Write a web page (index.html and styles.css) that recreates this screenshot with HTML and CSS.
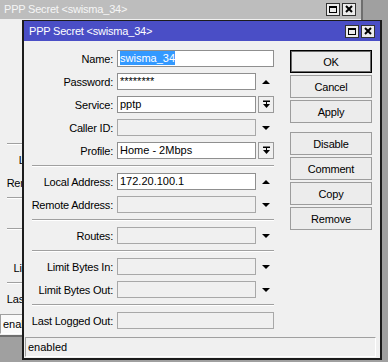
FILE: index.html
```html
<!DOCTYPE html>
<html lang="en">
<head>
    <meta charset="UTF-8">
    <meta name="viewport" content="width=device-width, initial-scale=1.0">
    <title>PPP Secret &lt;swisma_34&gt;</title>
    <link rel="stylesheet" href="styles.css">
</head>
<body>
    <div class="desktop">
        <!-- window behind, only its left strip shows; labels hidden by the front window are left empty -->
        <div class="window back">
            <div class="titlebar">
                <span class="title">PPP Secret &lt;swisma_34&gt;</span>
                <span class="tbtn"><span class="box"></span></span>
                <span class="tbtn"><svg width="8" height="8" viewBox="0 0 8 8"><path d="M1 1L7 7M7 1L1 7" stroke="#000" stroke-width="2"/></svg></span>
            </div>
            <div class="body">
                <div class="main">
                    <div class="form">
                        <div class="row"><label></label><div class="field wide"></div></div>
                        <div class="row"><label></label><div class="field"></div></div>
                        <div class="row"><label></label><div class="field"></div></div>
                        <div class="row"><label></label><div class="field"></div></div>
                        <div class="row"><label></label><div class="field"></div></div>
                        <div class="sep"></div>
                        <div class="row"><label>Local Address:</label><div class="field"></div></div>
                        <div class="row"><label>Remote Address:</label><div class="field"></div></div>
                        <div class="sep"></div>
                        <div class="row"><label></label><div class="field"></div></div>
                        <div class="sep"></div>
                        <div class="row"><label></label><div class="field"></div></div>
                        <div class="row"><label>Limit Bytes Out:</label><div class="field"></div></div>
                        <div class="sep"></div>
                        <div class="row"><label>Last Logged Out:</label><div class="field wide"></div></div>
                    </div>
                </div>
                <div class="status">enabled</div>
            </div>
        </div>

        <div class="window front">
            <div class="titlebar">
                <span class="title">PPP Secret &lt;swisma_34&gt;</span>
                <span class="tbtn"><span class="box"></span></span>
                <span class="tbtn"><svg width="8" height="8" viewBox="0 0 8 8"><path d="M1 1L7 7M7 1L1 7" stroke="#000" stroke-width="2"/></svg></span>
            </div>
            <div class="body">
                <div class="main">
                    <div class="form">
                        <div class="row"><label>Name:</label><div class="field wide"><span class="sel">swisma_34</span></div></div>
                        <div class="row"><label>Password:</label><div class="field">********</div><span class="spin up"></span></div>
                        <div class="row">
                            <label>Service:</label><div class="field">pptp</div>
                            <span class="spin drop"><svg width="9" height="9" viewBox="0 0 9 9"><rect x="1" y="0.5" width="7" height="1.5"/><rect x="4" y="2" width="1" height="2"/><path d="M1 4h7l-3.5 4z"/></svg></span>
                        </div>
                        <div class="row"><label>Caller ID:</label><div class="field off"></div><span class="spin down"></span></div>
                        <div class="row">
                            <label>Profile:</label><div class="field">Home - 2Mbps</div>
                            <span class="spin drop"><svg width="9" height="9" viewBox="0 0 9 9"><rect x="1" y="0.5" width="7" height="1.5"/><rect x="4" y="2" width="1" height="2"/><path d="M1 4h7l-3.5 4z"/></svg></span>
                        </div>
                        <div class="sep"></div>
                        <div class="row"><label>Local Address:</label><div class="field">172.20.100.1</div><span class="spin up"></span></div>
                        <div class="row"><label>Remote Address:</label><div class="field off"></div><span class="spin down"></span></div>
                        <div class="sep"></div>
                        <div class="row"><label>Routes:</label><div class="field off"></div><span class="spin down"></span></div>
                        <div class="sep"></div>
                        <div class="row"><label>Limit Bytes In:</label><div class="field off"></div><span class="spin down"></span></div>
                        <div class="row"><label>Limit Bytes Out:</label><div class="field off"></div><span class="spin down"></span></div>
                        <div class="sep"></div>
                        <div class="row"><label>Last Logged Out:</label><div class="field wide off"></div></div>
                    </div>
                    <div class="buttons">
                        <div class="btn default">OK</div>
                        <div class="btn">Cancel</div>
                        <div class="btn">Apply</div>
                        <div class="btn gap">Disable</div>
                        <div class="btn">Comment</div>
                        <div class="btn">Copy</div>
                        <div class="btn">Remove</div>
                    </div>
                </div>
                <div class="status">enabled</div>
            </div>
        </div>
    </div>
</body>
</html>
```

FILE: styles.css
```css
body {
    margin: 0;
    font-family: "Liberation Sans", Arial, sans-serif;
    font-size: 11px;
    color: #000;
    background-color: #a0a0a0;
}
.desktop {
    position: relative;
    width: 388px;
    height: 362px;
    overflow: hidden;
    background-color: #a0a0a0;
}
.window {
    position: absolute;
    display: flex;
    flex-direction: column;
    box-sizing: border-box;
    background-color: #f0f0f0;
    border: 2px solid #1c1c1c;
    border-top-width: 1px;
}
.window.back {
    left: -3px;
    top: -2px;
    width: 366px;
    height: 339px;
    border-color: #6e6e6e;
}
.window.front {
    left: 22px;
    top: 20px;
    width: 360px;
    height: 340px;
}
.titlebar {
    display: flex;
    align-items: center;
    height: 20px;
    padding: 0 5px;
    background-color: #4a4ec6;
    color: #fff;
}
.back .titlebar {
    background-color: #bdbdbd;
    color: #f6f6f6;
}
.title {
    flex: 1;
    white-space: nowrap;
    letter-spacing: -0.2px;
}
.tbtn {
    display: flex;
    align-items: center;
    justify-content: center;
    width: 14px;
    height: 13px;
    margin-left: 2px;
    box-sizing: border-box;
    border: 1px solid #333;
    background-color: #ececec;
}
.tbtn .box {
    width: 8px;
    height: 7px;
    box-sizing: border-box;
    border: 1px solid #000;
    border-top-width: 2px;
}
.body {
    display: flex;
    flex-direction: column;
    flex: 1;
}
/* the back window is covered past x=22, so its body is cut there */
.back .body {
    width: 23px;
    overflow: hidden;
}
.main {
    display: flex;
    gap: 16px;
    padding: 9px 8px 0 8px;
}
.form {
    display: flex;
    flex-direction: column;
    flex-shrink: 0;
    gap: 6px;
    width: 242px;
}
.row {
    display: flex;
    align-items: center;
    height: 17px;
}
.row label {
    display: flex;
    justify-content: flex-end;
    width: 81px;
    margin-right: 4px;
    white-space: nowrap;
    letter-spacing: -0.2px;
}
.field {
    box-sizing: border-box;
    width: 139px;
    height: 17px;
    padding: 0 2px;
    border: 1px solid #8f8f8f;
    background-color: #fff;
    line-height: 15px;
    white-space: nowrap;
    overflow: hidden;
}
.field.wide {
    width: 157px;
}
.field.off {
    background-color: #f0f0f0;
    border-color: #a8a8a8;
}
.sel {
    background-color: #3399ff;
    color: #fff;
    padding: 1px 0;
}
.spin {
    display: flex;
    align-items: center;
    justify-content: center;
    width: 16px;
    height: 17px;
    margin-left: 2px;
    box-sizing: border-box;
}
.spin.drop {
    border: 1px solid #9a9a9a;
    background-color: #f0f0f0;
}
.spin.up::before {
    content: "";
    border-left: 4px solid transparent;
    border-right: 4px solid transparent;
    border-bottom: 4px solid #000;
}
.spin.down::before {
    content: "";
    border-left: 4px solid transparent;
    border-right: 4px solid transparent;
    border-top: 4px solid #000;
}
.sep {
    border-top: 1px solid #a0a0a0;
    border-bottom: 1px solid #fff;
}
.buttons {
    display: flex;
    flex-direction: column;
    gap: 2px;
    width: 82px;
}
.btn {
    display: flex;
    align-items: center;
    justify-content: center;
    height: 23px;
    box-sizing: border-box;
    border: 1px solid #9c9c9c;
    background-color: #ececec;
    letter-spacing: -0.2px;
}
.btn.default {
    border-color: #000;
    box-shadow: inset 0 0 0 1px #6b6b6b;
}
.btn.gap {
    margin-top: 7px;
}
.status {
    height: 20px;
    margin: auto 4px 1px 1px;
    padding-left: 2px;
    box-sizing: border-box;
    line-height: 18px;
    border: 1px solid;
    border-color: #a0a0a0 #fff #fff #a0a0a0;
    white-space: nowrap;
}
.back .status {
    margin-right: -10px;
    background-color: #fafafa;
}
```
